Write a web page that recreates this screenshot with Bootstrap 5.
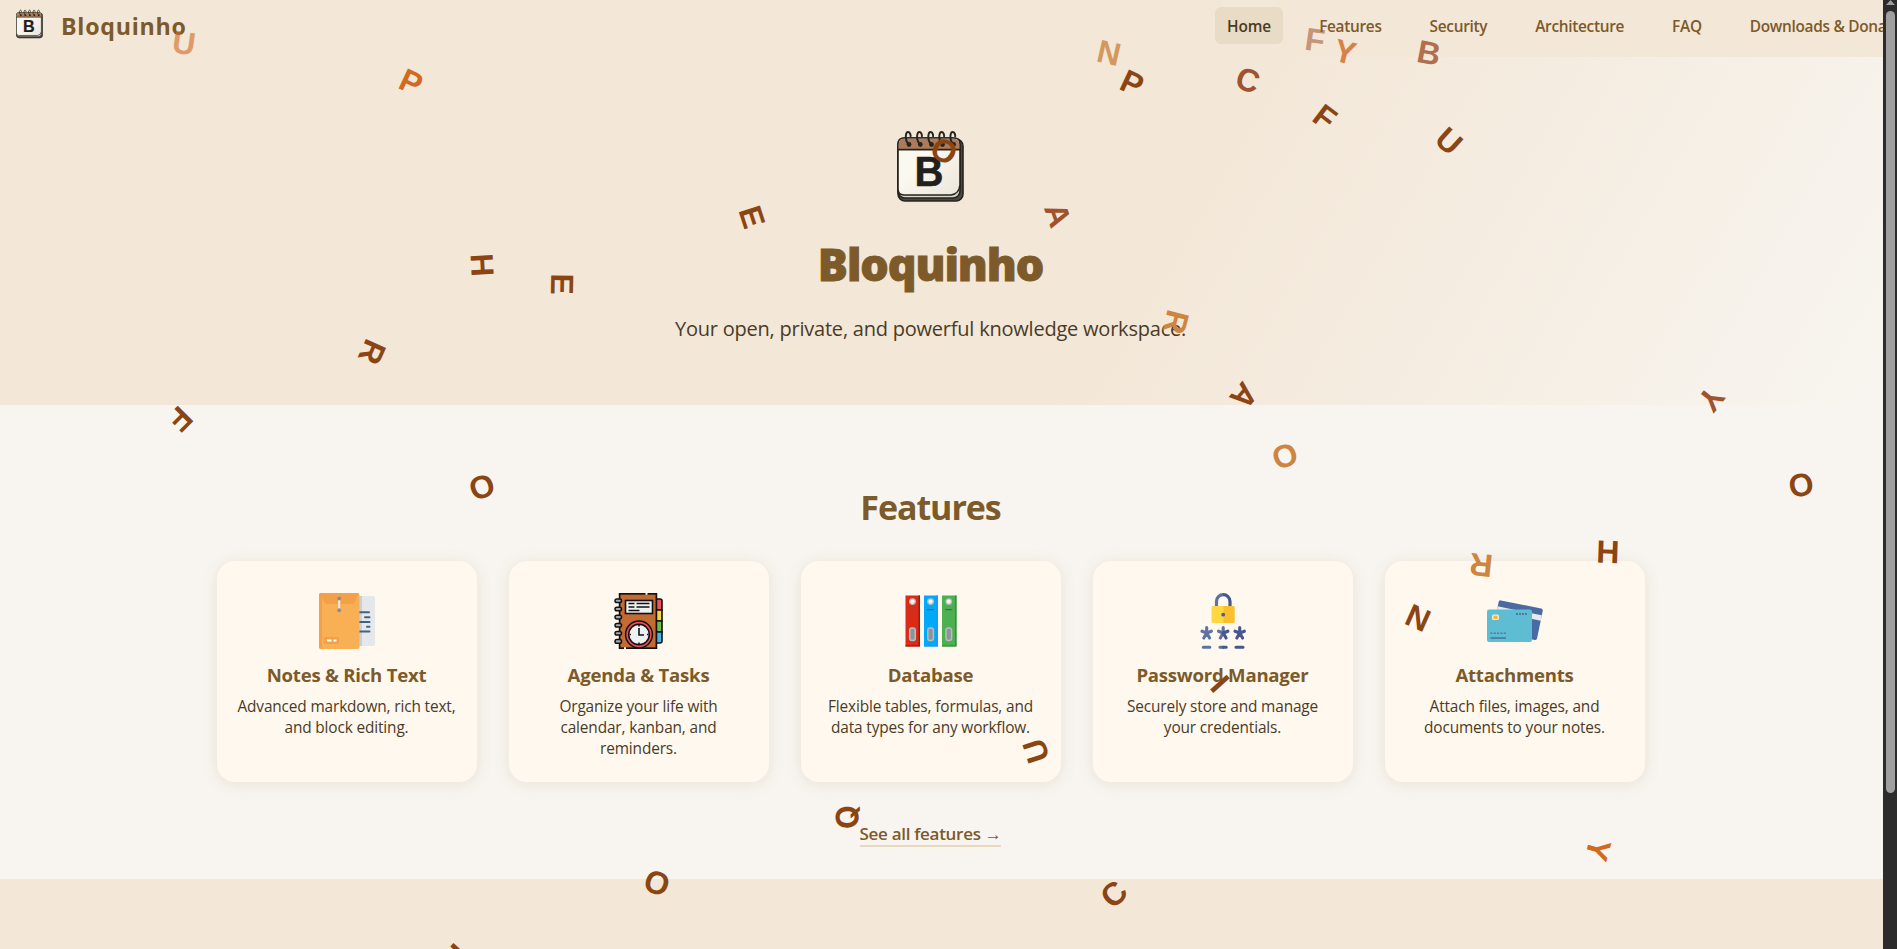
<!DOCTYPE html>
<html lang="en">
<head>
<meta charset="utf-8">
<meta name="viewport" content="width=device-width, initial-scale=1">
<title>Bloquinho</title>
<link href="https://cdn.jsdelivr.net/npm/bootstrap@5.3.0/dist/css/bootstrap.min.css" rel="stylesheet">
<style>
  :root { --sand:#f3e7d7; --paper:#f8f5f0; --brown:#7c5a2a; --ink:#4a3b28; }
  body { font-family:"Open Sans","Noto Sans",sans-serif; background:var(--paper); color:var(--ink); height:949px; overflow:hidden; }
  .page { height:949px; overflow:hidden; }
  .site-nav { height:57px; background:var(--sand); padding:0 0 0 16px; flex-wrap:nowrap; }
  .brand-link { margin-top:-9px; }
  .brand-name { font-size:23.2px; font-weight:700; line-height:1; color:var(--brown); margin-left:18px; padding-top:5px; letter-spacing:.75px; }
  .site-links { gap:24px; width:668px; white-space:nowrap; margin-top:-6px; }
  .site-links a { font-size:15.4px; font-weight:600; letter-spacing:-.3px; color:var(--brown); padding:1px 12px 0; height:37px; line-height:37px; border-radius:6px; text-decoration:none; }
  .site-links a.active { background:#e8dcc6; color:#4b3a22; letter-spacing:-.1px; }
  .hero { height:348px; padding:74px 22px 0 0; background:linear-gradient(120deg,var(--sand) 60%,var(--paper) 100%); }
  .hero h1 { font-size:44.8px; font-weight:800; letter-spacing:-1.1px; -webkit-text-stroke:.9px var(--brown); line-height:60px; color:var(--brown); margin:32px 0 0; }
  .hero p { font-size:20px; letter-spacing:-.22px; line-height:30px; margin:20px 0 0; }
  .features { height:474px; padding:78px 22px 0 0; }
  .features h2 { font-size:34px; font-weight:700; letter-spacing:-1.05px; line-height:48px; color:var(--brown); margin:0 0 30px; }
  .card-row { gap:32px; }
  .feature { width:260px; height:221px; padding:32px 16px; background:#fff8ee; border-radius:18px; box-shadow:0 2px 16px rgba(124,90,42,.12); }
  .feature svg { width:56px; height:56px; display:block; margin:0 auto; }
  .feature h3 { font-size:18.6px; font-weight:700; letter-spacing:-.24px; line-height:26px; color:var(--brown); margin:13px 0 8px; white-space:nowrap; }
  .feature p { font-size:15.4px; letter-spacing:-.14px; line-height:21px; margin:0; white-space:nowrap; }
  .more-row { margin-top:40px; }
  .more { font-size:17px; font-weight:600; letter-spacing:-.3px; line-height:24px; color:var(--brown); text-decoration:none; border-bottom:2px solid #e8d8bd; white-space:nowrap; }
  .next { height:70px; background:var(--sand); }
  .rail { width:14px; background:#2c2c2c; }
  .thumb { width:9px; height:782px; background:#9f9f9f; border-radius:5px; }
  .rain { inset:0; pointer-events:none; overflow:hidden; }
  .rain span { position:absolute; left:calc(var(--x)*1px); top:calc(var(--y)*1px); transform:translate(-50%,-50%) rotate(calc(var(--r)*1deg)); font:700 32px/1 "Liberation Sans",Arial,sans-serif; color:#8b4513; }
  .rain .sienna { color:#a0522d } .rain .peru { color:#cd853f } .rain .choco { color:#d2691e }
  .rain .straight { font-family:Inter,sans-serif; font-size:31px; }
</style>
</head>
<body>
<svg width="0" height="0" class="position-absolute">
  <defs>
    <linearGradient id="sheet" x1="0" y1="0" x2="1" y2="1"><stop offset=".4" stop-color="#fbf8f0"/><stop offset="1" stop-color="#ebe6da"/></linearGradient>
    <symbol id="logo" viewBox="0 0 67 71">
      <rect x="1" y="8" width="65" height="62" rx="7" fill="#4b4842" stroke="#262420" stroke-width="1.6"/>
      <rect x="1" y="7" width="62" height="60" rx="7" fill="#d9d3c8" stroke="#262420" stroke-width="1.6"/>
      <path d="M1 13Q1 7 7 7H57Q63 7 63 13V54Q62 63 54 64H7Q1 64 1 58Z" fill="url(#sheet)" stroke="#262420" stroke-width="1.6"/>
      <path d="M1.8 18V13Q2 7.8 7 7.8H57Q62 8 62.2 13V18Z" fill="#ad7b57"/>
      <path d="M1 18.6H63" stroke="#262420" stroke-width="1.7"/>
      <g fill="none" stroke="#262420" stroke-width="1.9">
        <path id="ring" d="M11.5 13.5C7 8 9 1 11 1S14 4 13.5 6"/>
        <use href="#ring" x="11.3"/><use href="#ring" x="22.5"/><use href="#ring" x="33.5"/><use href="#ring" x="44.6"/>
      </g>
      <g fill="#262420"><circle cx="12" cy="13.5" r="2.4"/><circle cx="23.3" cy="13.5" r="2.4"/><circle cx="34.5" cy="13.5" r="2.4"/><circle cx="45.5" cy="13.5" r="2.4"/><circle cx="56.6" cy="13.5" r="2.4"/></g>
      <text x="32" y="54.5" text-anchor="middle" font-family="Liberation Sans, Arial, sans-serif" font-weight="700" font-size="43" textLength="29" lengthAdjust="spacingAndGlyphs" fill="#22201d" stroke="#22201d" stroke-width=".5">B</text>
    </symbol>
  </defs>
</svg>
<div class="page d-flex position-relative">
  <div class="flex-grow-1 overflow-hidden">
    <header class="site-nav d-flex align-items-center justify-content-between">
      <a href="#" class="brand-link d-flex align-items-center text-decoration-none">
        <svg width="27" height="30"><use href="#logo"/></svg>
        <span class="brand-name">Bloquinho</span>
      </a>
      <nav class="site-links d-flex">
        <a class="active" href="#">Home</a><a href="#">Features</a><a href="#">Security</a><a href="#">Architecture</a><a href="#">FAQ</a><a href="#">Downloads &amp; Donations</a>
      </nav>
    </header>
    <section class="hero text-center">
      <svg width="67" height="71"><use href="#logo"/></svg>
      <h1>Bloquinho</h1>
      <p>Your open, private, and powerful knowledge workspace.</p>
    </section>
    <section class="features text-center">
      <h2>Features</h2>
      <div class="card-row d-flex justify-content-center">
        <article class="feature">
          <svg viewBox="0 0 56 56">
            <rect x="30" y="3" width="20.5" height="50" rx="2" fill="#e4e8eb"/><rect x="30" y="3" width="20.5" height="50" fill="none"/><path d="M36 3h3v50h-3z" fill="#c9d0d8"/>
            <rect x="40" y="3" width="16" height="50" rx="2" fill="#e4e8eb"/><path d="M40 3h3v50h-3z" fill="#c9d0d8"/>
            <g stroke="#3f6380" stroke-width="2" stroke-linecap="round"><path d="M40 19.300h10M46 24.200h4.500M40 29h10.500M48 33.800h2.500M40 38.500h10.500"/></g>
            <rect width="40.500" height="56" rx="2" fill="#f9b055"/><path d="M2 0h1v56H2a2 2 0 0 1-2-2V2a2 2 0 0 1 2-2z" fill="#f3a048"/>
            <path d="M1 0H39.500L36 9Q35 11 32 11H8Q6 11 5 9Z" fill="#f3a048"/>
            <path d="M20.200 6v11" stroke="#f4f1ea" stroke-width="2"/><circle cx="20.200" cy="5.600" r="2" fill="#8a8d94"/><circle cx="20.200" cy="17.300" r="2" fill="#8a8d94"/>
            <rect x="5" y="44" width="15" height="7" rx="1" fill="#f3a048"/><path d="M8 47.400h4.500M14.500 47.400h3" stroke="#fff" stroke-width="2"/>
          </svg>
          <h3>Notes &amp; Rich Text</h3>
          <p>Advanced markdown, rich text,<br>and block editing.</p>
        </article>
        <article class="feature">
          <svg viewBox="0 0 56 56">
            <g stroke="#111" stroke-width="1.600"><path d="M45 6h4q2 0 2 2v9h-6z" fill="#f0525f"/><path d="M45 17h6v11h-6z" fill="#fbd33c"/><path d="M45 28h6v11h-6z" fill="#6cbf45"/><path d="M45 39h6v9q0 2-2 2h-4z" fill="#3fb6ec"/></g>
            <rect x="8.600" y=".8" width="36.800" height="54.400" fill="#c46a33" stroke="#111" stroke-width="1.700"/>
            <g fill="#a9aaad" stroke="#111" stroke-width="1.500"><rect x="4" y="6" width="6.500" height="3.600" rx="1.800"/><rect x="4" y="14.200" width="6.500" height="3.600" rx="1.800"/><rect x="4" y="22.300" width="6.500" height="3.600" rx="1.800"/><rect x="4" y="30.400" width="6.500" height="3.600" rx="1.800"/><rect x="4" y="38.500" width="6.500" height="3.600" rx="1.800"/><rect x="4" y="46.600" width="6.500" height="3.600" rx="1.800"/></g>
            <rect x="14.500" y="7.500" width="27" height="13" fill="#eef1f4" stroke="#111" stroke-width="1.600"/>
            <path d="M17.500 10.500h6M25.500 10.500h13M17.500 14h6M25.500 14h13M17.500 17.500h11" stroke="#111" stroke-width="1.400"/>
            <circle cx="28" cy="41.500" r="13.400" fill="#ef4b58" stroke="#111" stroke-width="1.500"/><circle cx="28" cy="41.500" r="10.300" fill="#eef1f4" stroke="#111" stroke-width="1.500"/>
            <path d="M28 35v7h5M28 32v1.500M28 49.500v1.500M18.500 41.500h1.500M36 41.500h1.500" fill="none" stroke="#111" stroke-width="1.600"/>
            <path d="M34.500 .8h2M13 55.200h2" stroke="#fff8ee" stroke-width="1.800"/>
          </svg>
          <h3>Agenda &amp; Tasks</h3>
          <p>Organize your life with<br>calendar, kanban, and<br>reminders.</p>
        </article>
        <article class="feature">
          <svg viewBox="0 0 56 56">
            <rect x="2.500" y="2.500" width="14.500" height="51" fill="#d92b16"/><path d="M15.500 2.500H17v51H2.500v-1.300h13z" fill="#a8140c"/>
            <rect x="21" y="2.500" width="14" height="51" fill="#03a9f9"/><path d="M33.500 2.500H35v51H21v-1.300h12.500z" fill="#2196f3"/>
            <rect x="39" y="2.500" width="14.500" height="51" fill="#4caf50"/><path d="M52 2.500h1.500v51H39v-1.300h13z" fill="#388e3c"/>
            <g fill="#f4f4f4" stroke="#b9bcbd" stroke-width="1.300"><circle cx="9.500" cy="8.600" r="2.800"/><circle cx="27.600" cy="8.600" r="2.800"/><circle cx="45.800" cy="8.600" r="2.800"/></g>
            <path d="M6 16.600h7M24 16.600h7M42.300 16.600h7" stroke="#5b5f62" stroke-width="1.400"/>
            <g fill="#8c9499" stroke="#b9bcbd" stroke-width="1.500"><rect x="6.700" y="35" width="5.600" height="12.500" rx="2.200"/><rect x="24.800" y="35" width="5.600" height="12.500" rx="2.200"/><rect x="43" y="35" width="5.600" height="12.500" rx="2.200"/></g>
          </svg>
          <h3>Database</h3>
          <p>Flexible tables, formulas, and<br>data types for any workflow.</p>
        </article>
        <article class="feature">
          <svg viewBox="0 0 56 56">
            <path d="M21.500 14V8.500a6.700 6.700 0 0 1 6.700-6.800" fill="none" stroke="#5e71a0" stroke-width="3.200"/><path d="M28 1.700a6.700 6.700 0 0 1 7 6.800V14" fill="none" stroke="#47568f" stroke-width="3.200"/>
            <path d="M18 13h10.300v17H18q-1.500 0-1.500-1.500v-14q0-1.500 1.500-1.500z" fill="#ffd742"/><path d="M28.200 13h10q1.500 0 1.500 1.500v14q0 1.500-1.500 1.500h-10z" fill="#fbbf2d"/><circle cx="28.200" cy="21.700" r="1.900" fill="#4d5d92"/>
            <g stroke-width="3.1" stroke-linecap="round">
              <path d="M11.700 34.500V40M7 38.200l4.700 1.800M16.400 38.200L11.700 40M8.800 45l2.900-5M14.600 45l-2.900-5" stroke="#5e71a0"/>
              <path d="M28.200 34.500V40M23.500 38.200l4.700 1.800M25.300 45l2.900-5" stroke="#5e71a0"/><path d="M32.900 38.200L28.200 40M31.100 45l-2.900-5" stroke="#47568f"/>
              <path d="M44.700 34.500V40M40 38.200l4.700 1.800M49.400 38.200L44.700 40M41.800 45l2.900-5M47.600 45l-2.900-5" stroke="#47568f"/>
              <path d="M8.300 54.300h6.500M25 54.300h3" stroke="#5e71a0"/><path d="M28.200 54.300h3M41 54.300h7" stroke="#47568f"/>
            </g>
          </svg>
          <h3>Password Manager</h3>
          <p>Securely store and manage<br>your credentials.</p>
        </article>
        <article class="feature">
          <svg viewBox="0 0 56 56">
            <g transform="rotate(11.500 12 7)"><rect x="12" y="7" width="45" height="32" rx="2" fill="#4a6ba1"/><path d="M12 13.500h45v5.500H12z" fill="#e6e9ee"/></g>
            <rect x="0" y="16.500" width="45" height="32.500" rx="2" fill="#5ebdd3"/>
            <rect x="5" y="21.500" width="7" height="5.600" rx="1.500" fill="#fbe9cb"/><rect x="6.500" y="22.700" width="4" height="3.200" fill="#fbb13c"/>
            <path d="M29 21h11" stroke="#4a7aa6" stroke-width="2" stroke-dasharray="2 1"/><path d="M3.500 40.300h16" stroke="#4a7aa6" stroke-width="1.600" stroke-dasharray="2 1.300"/><path d="M3.500 45h15.500" stroke="#4a7aa6" stroke-width="1.700"/>
          </svg>
          <h3>Attachments</h3>
          <p>Attach files, images, and<br>documents to your notes.</p>
        </article>
      </div>
      <div class="more-row"><a class="more" href="#">See all features →</a></div>
    </section>
    <section class="next"></section>
  </div>
  <div class="rail d-flex flex-column align-items-center">
    <svg width="9" height="11"><path d="M0 5L4.500 0 9 5z" fill="#9f9f9f"/></svg>
    <div class="thumb"></div>
  </div>
  <div class="rain position-absolute" aria-hidden="true">
    <span class="choco" style="--x:184;--y:43;--r:8;opacity:.6">U</span>
    <span class="choco" style="--x:411;--y:82;--r:25">P</span>
    <span class="peru" style="--x:1108.500;--y:53;--r:13;opacity:.8">N</span>
    <span style="--x:1131.500;--y:83.300;--r:25">P</span>
    <span class="sienna" style="--x:1248;--y:80;--r:18">C</span>
    <span class="sienna" style="--x:1315;--y:39.500;--r:8;opacity:.55">F</span>
    <span class="choco" style="--x:1344.500;--y:51.500;--r:14;opacity:.8">Y</span>
    <span class="sienna" style="--x:1428.500;--y:53;--r:11;opacity:.8">B</span>
    <span style="--x:1324.500;--y:117;--r:37">F</span>
    <span style="--x:1449;--y:141;--r:42">U</span>
    <span style="--x:944.300;--y:150.700;--r:30">O</span>
    <span style="--x:751.700;--y:217;--r:72">E</span>
    <span class="sienna" style="--x:1058;--y:215;--r:71">A</span>
    <span style="--x:482;--y:265.300;--r:87">H</span>
    <span style="--x:561.700;--y:284;--r:91">E</span>
    <span style="--x:371.800;--y:352;--r:114">R</span>
    <span style="--x:180;--y:418.500;--r:135">F</span>
    <span style="--x:481.700;--y:487;--r:-20">O</span>
    <span class="peru" style="--x:1175.500;--y:321.700;--r:104">R</span>
    <span style="--x:1244;--y:396;--r:130">A</span>
    <span class="sienna" style="--x:1711;--y:399;--r:128">Y</span>
    <span class="peru" style="--x:1285;--y:456;--r:-20">O</span>
    <span style="--x:1800.600;--y:485;--r:-10">O</span>
    <span class="peru" style="--x:1481.300;--y:565.300;--r:186">R</span>
    <span style="--x:1608.300;--y:551.500;--r:2">H</span>
    <span style="--x:1418;--y:618;--r:24">N</span>
    <span style="--x:1219.700;--y:684.300;--r:48">I</span>
    <span style="--x:1036;--y:751;--r:252">U</span>
    <span class="straight" style="--x:847;--y:816.500;--r:-93">Q</span>
    <span style="--x:656.500;--y:883;--r:20">O</span>
    <span style="--x:1114;--y:894.300;--r:-45">C</span>
    <span class="choco" style="--x:1598;--y:850;--r:105">Y</span>
    <span style="--x:460;--y:952;--r:-48">I</span>
  </div>
</div>
<script src="https://cdn.jsdelivr.net/npm/bootstrap@5.3.0/dist/js/bootstrap.bundle.min.js"></script>
</body>
</html>
